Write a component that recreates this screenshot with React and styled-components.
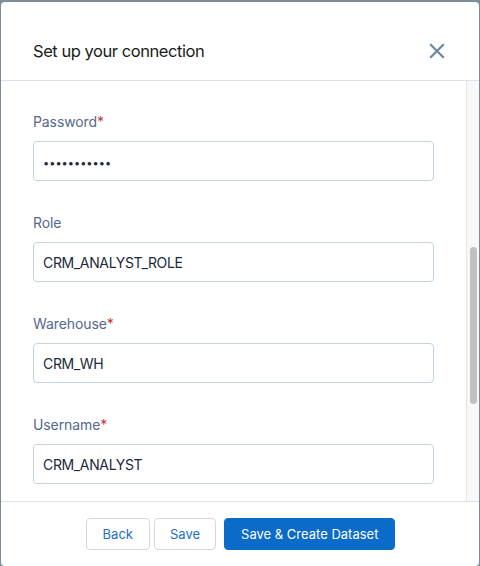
import React from "react";
import styled, { createGlobalStyle } from "styled-components";

const GlobalStyle = createGlobalStyle`
  html, body {
    margin: 0;
    padding: 0;
    background: #7e8b99;
    font-family: Inter, "Noto Sans", "Liberation Sans", sans-serif;
    overflow: hidden;
  }
`;

const Modal = styled.div`
  margin: 2px 1px 0 1px;
  height: 564px;
  background: #fff;
  border-radius: 4px;
  display: flex;
  flex-direction: column;
  overflow: hidden;
`;

const Header = styled.header`
  height: 79px;
  box-sizing: border-box;
  padding: 37px 32px 0 32px;
  border-bottom: 1px solid #dde3ea;
  display: flex;
  justify-content: space-between;
  align-items: flex-start;
  flex-shrink: 0;
`;

const Title = styled.h2`
  margin: 0;
  font-size: 16.5px;
  line-height: 24px;
  font-weight: 400;
  letter-spacing: -0.45px;
  color: #181b20;
`;

const CloseButton = styled.button`
  border: 0;
  background: none;
  padding: 0;
  margin: 1px -1px 0 0;
  width: 22px;
  height: 22px;
  display: flex;
  align-items: center;
  justify-content: center;
  color: #6a86a6;
  cursor: pointer;
`;

const Body = styled.div`
  flex: 1;
  display: flex;
  min-height: 0;
`;

const Content = styled.div`
  flex: 1;
  overflow: hidden;
  padding: 31px 32px 0 32px;
`;

const ScrollTrack = styled.div`
  width: 12px;
  flex-shrink: 0;
  background: #f8f8f8;
  border-left: 1px solid #e4e4e4;
  display: flex;
  flex-direction: column;
`;

const ScrollThumb = styled.div`
  margin: ${(p) => p.$offset}px 2px 0 3px;
  height: ${(p) => p.$size}px;
  background: #c1c1c1;
  border-radius: 4px;
`;

const Field = styled.div`
  margin-bottom: 32px;
`;

const Label = styled.label`
  display: block;
  font-size: 14px;
  line-height: 20px;
  letter-spacing: -0.1px;
  color: #54698d;
  margin-bottom: 9px;
`;

const Required = styled.span`
  color: #c23934;
`;

const Input = styled.input`
  display: block;
  width: 100%;
  box-sizing: border-box;
  height: 40px;
  padding: ${(p) => (p.type === "password" ? "4px 9px 0" : "0 9px")};
  border: 1px solid #c6d2df;
  border-radius: 4px;
  font-family: inherit;
  font-size: ${(p) => (p.type === "password" ? "11px" : "14px")};
  letter-spacing: ${(p) => (p.type === "password" ? "0" : "-0.35px")};
  color: #1c2a3a;
  background: #fff;
  outline: none;
`;

const Footer = styled.footer`
  height: 64px;
  flex-shrink: 0;
  border-top: 1px solid #dde3ea;
  display: flex;
  align-items: center;
  justify-content: center;
  padding-left: 1px;
`;

const Button = styled.button`
  height: 32px;
  padding: 0 ${(p) => p.$pad || 16}px;
  margin-left: ${(p) => p.$gap || 0}px;
  border-radius: 4px;
  font-family: inherit;
  font-size: 13px;
  cursor: pointer;
  border: 1px solid ${(p) => (p.$brand ? "#0b6bc8" : "#d4d7dc")};
  background: ${(p) => (p.$brand ? "#0b6bc8" : "#fff")};
  color: ${(p) => (p.$brand ? "#fff" : "#1b6fc4")};
`;

const CloseIcon = () => (
  <svg width="16" height="16" viewBox="0 0 16 16" fill="none">
    <path d="M2 2 L14 14 M14 2 L2 14" stroke="currentColor" strokeWidth="2.2" strokeLinecap="square" />
  </svg>
);

const fields = [
  { label: "Password", required: true, value: "crmanalyst1", type: "password" },
  { label: "Role", value: "CRM_ANALYST_ROLE" },
  { label: "Warehouse", required: true, value: "CRM_WH" },
  { label: "Username", required: true, value: "CRM_ANALYST" },
];

export default function App() {
  return (
    <>
      <GlobalStyle />
      <Modal>
        <Header>
          <Title>Set up your connection</Title>
          <CloseButton aria-label="Close">
            <CloseIcon />
          </CloseButton>
        </Header>
        <Body>
          <Content>
            {fields.map((f) => (
              <Field key={f.label}>
                <Label>
                  {f.label}
                  {f.required && <Required>*</Required>}
                </Label>
                <Input type={f.type || "text"} defaultValue={f.value} />
              </Field>
            ))}
          </Content>
          <ScrollTrack>
            <ScrollThumb $offset={166} $size={157} />
          </ScrollTrack>
        </Body>
        <Footer>
          <Button>Back</Button>
          <Button $gap={4} $pad={15}>Save</Button>
          <Button $gap={8} $brand>
            Save &amp; Create Dataset
          </Button>
        </Footer>
      </Modal>
    </>
  );
}
